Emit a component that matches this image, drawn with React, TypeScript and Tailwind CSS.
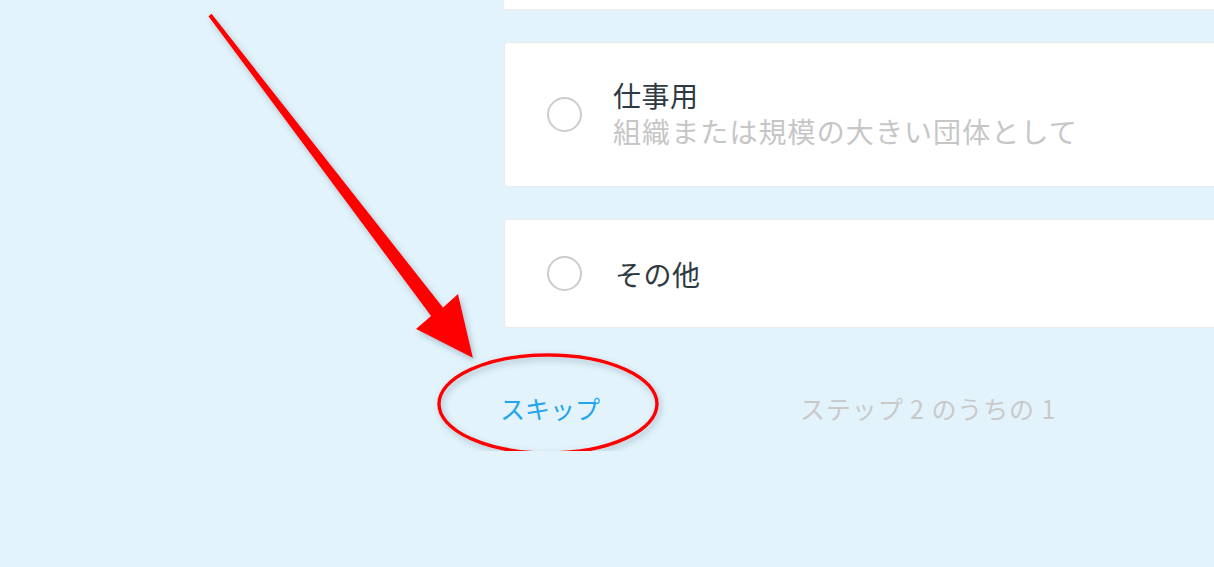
import React from "react";

const jp = { fontFamily: '"Noto Sans CJK JP", "Noto Sans", sans-serif' };

function Radio() {
  return <div className="w-[35px] h-[35px] rounded-full border-2 border-[#cccccc] bg-white shrink-0" />;
}

export default function App() {
  return (
    <div className="relative w-full h-[567px] bg-[#e2f3fb] overflow-hidden" style={jp}>
      <div className="flex flex-col pl-[504px] mr-[-8px]">
        <div className="h-[10px] bg-white border-b border-[#ebebeb] rounded-b-[3px]" />
        <div className="mt-[32px] h-[145px] bg-white border border-[#ebebeb] rounded-[3px] flex items-center pl-[42px]">
          <Radio />
          <div className="ml-[31px] mb-[3px] flex flex-col">
            <span className="text-[28px] leading-[36px] text-[#2e3a42] tracking-[0.5px]">仕事用</span>
            <span className="text-[28px] leading-[36px] text-[#c6c6c6] tracking-[1.1px]">組織または規模の大きい団体として</span>
          </div>
        </div>
        <div className="mt-[32px] h-[109px] bg-white border border-[#ebebeb] rounded-[3px] flex items-center pl-[42px]">
          <Radio />
          <span className="ml-[33px] text-[28px] leading-[36px] text-[#2e3a42] tracking-[0.5px]">その他</span>
        </div>
        <div className="mt-[62px] ml-[-4px] flex items-center">
          <span className="text-[25px] leading-[36px] text-[#22a4ee]">スキップ</span>
          <span className="ml-[200px] text-[25px] leading-[36px] text-[#c9c9c9] tracking-[0.9px]">ステップ 2 のうちの 1</span>
        </div>
      </div>

      <svg className="absolute top-0 left-0 pointer-events-none" width="1214" height="451" viewBox="0 0 1214 451">
        <defs>
          <filter id="sh" x="-20%" y="-20%" width="140%" height="140%">
            <feDropShadow dx="2" dy="3" stdDeviation="3" floodColor="#5a7f8f" floodOpacity="0.45" />
          </filter>
        </defs>
        <polygon
          points="211.6,13.8 443,307.5 458,294 473,358 416,329 431,316 208.4,16.2"
          fill="#ff0000"
          strokeLinejoin="round"
          filter="url(#sh)"
        />
        <ellipse cx="548" cy="404" rx="109" ry="49" fill="none" stroke="#ff0000" strokeWidth="3.5" filter="url(#sh)" />
      </svg>
    </div>
  );
}
